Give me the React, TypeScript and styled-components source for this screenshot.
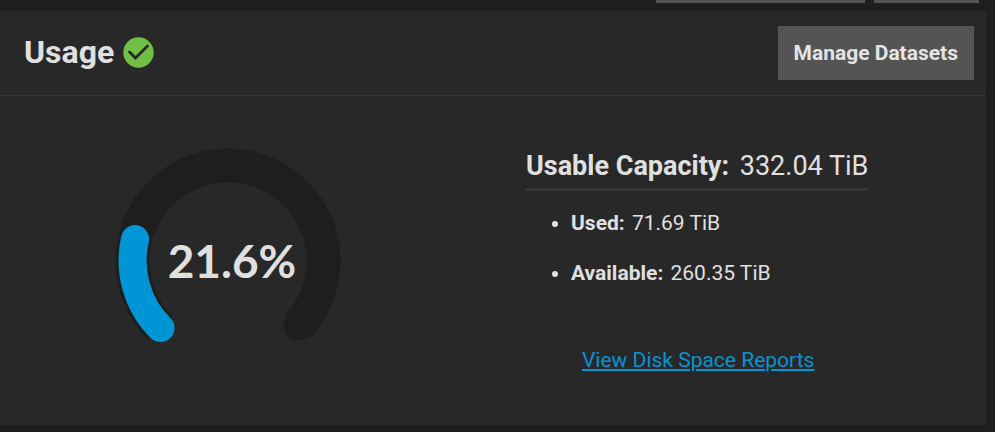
import React from "react";
import styled, { createGlobalStyle } from "styled-components";

const GlobalStyle = createGlobalStyle`
  * { box-sizing: border-box; }
  body {
    margin: 0;
    background: #1e1e1e;
    color: #e0e0e0;
    font-family: Roboto, sans-serif;
    overflow: hidden;
  }
`;

const Page = styled.main`
  display: flex;
  flex-direction: column;
  gap: 8px;
  padding-right: 9px;
`;

const TopActions = styled.div`
  display: flex;
  justify-content: flex-end;
  gap: 9px;
  padding-right: 7px;
`;

const TopAction = styled.div<{ $width: number }>`
  width: ${(p) => p.$width}px;
  height: 3px;
  background: #545454;
`;

const Card = styled.section`
  background: #282828;
`;

const CardHeader = styled.header`
  display: flex;
  align-items: center;
  justify-content: space-between;
  padding: 15px 12px 15px 24px;
  border-bottom: 1px solid #383838;
`;

const Title = styled.h3`
  display: flex;
  align-items: center;
  gap: 9px;
  margin: 0;
  padding-bottom: 2px;
  font-size: 32px;
  line-height: 40px;
  font-weight: 700;
`;

const ManageButton = styled.button`
  height: 54px;
  padding: 0 16px;
  border: 0;
  background: #545454;
  color: #e4e4e4;
  font: 700 21px/32px Roboto, sans-serif;
  white-space: nowrap;
`;

const CardContent = styled.div`
  display: grid;
  grid-template-columns: minmax(0, 456fr) minmax(0, 530fr);
  padding: 52px 0 49px;
`;

const GaugeBox = styled.div`
  display: grid;
  justify-items: center;
  align-items: start;

  > * { grid-area: 1 / 1; }
`;

const GaugeValue = styled.div`
  padding: 83px 0 0 8px;
  font: 700 46px/60px Lato, sans-serif;
`;

const Details = styled.div`
  display: flex;
  flex-direction: column;
  align-items: flex-start;
  padding-left: 70px;
`;

const Capacity = styled.div`
  padding-bottom: 4px;
  border-bottom: 3px solid #383838;
  font-size: 27px;
  line-height: 36px;
  white-space: nowrap;

  strong { margin-right: 4px; }
`;

const Breakdown = styled.ul`
  display: flex;
  flex-direction: column;
  gap: 18px;
  margin: 16px 0 0;
  padding-left: 45px;
  font-size: 21px;
  line-height: 32px;

  strong { margin-right: 2px; }
`;

const ReportsLink = styled.a`
  margin: 55px 0 0 56px;
  color: #0095d5;
  font-size: 21px;
  line-height: 32px;
  text-decoration: underline;
`;

function CheckIcon() {
  return (
    <svg width="31" height="31" viewBox="0 0 31 31" role="img" aria-label="Healthy">
      <circle cx="15.5" cy="15.5" r="15.2" fill="#71bf44" />
      <path d="M6.5 15 L12.5 21 L24.5 9" fill="none" stroke="#282828" strokeWidth="2.8" strokeLinecap="round" />
    </svg>
  );
}

function Gauge() {
  return (
    <svg width="226" height="196" viewBox="0 0 226 196" aria-hidden="true">
      <path d="M45.5 180.5 A95.5 95.5 0 1 1 182 179" fill="none" stroke="#1e1e1e" strokeWidth="34" />
      <circle cx="182.5" cy="178.5" r="14" fill="#1e1e1e" />
      <path d="M45.5 180 A95.5 95.5 0 0 1 20 91" fill="none" stroke="#0095d5" strokeWidth="28" strokeLinecap="round" />
    </svg>
  );
}

export default function App() {
  return (
    <>
      <GlobalStyle />
      <Page>
        <TopActions>
          <TopAction $width={209} />
          <TopAction $width={105} />
        </TopActions>
        <Card>
          <CardHeader>
            <Title>
              Usage
              <CheckIcon />
            </Title>
            <ManageButton type="button">Manage Datasets</ManageButton>
          </CardHeader>
          <CardContent>
            <GaugeBox>
              <Gauge />
              <GaugeValue>21.6%</GaugeValue>
            </GaugeBox>
            <Details>
              <Capacity>
                <strong>Usable Capacity:</strong> 332.04 TiB
              </Capacity>
              <Breakdown>
                <li><strong>Used:</strong> 71.69 TiB</li>
                <li><strong>Available:</strong> 260.35 TiB</li>
              </Breakdown>
              <ReportsLink href="#reports">View Disk Space Reports</ReportsLink>
            </Details>
          </CardContent>
        </Card>
      </Page>
    </>
  );
}
